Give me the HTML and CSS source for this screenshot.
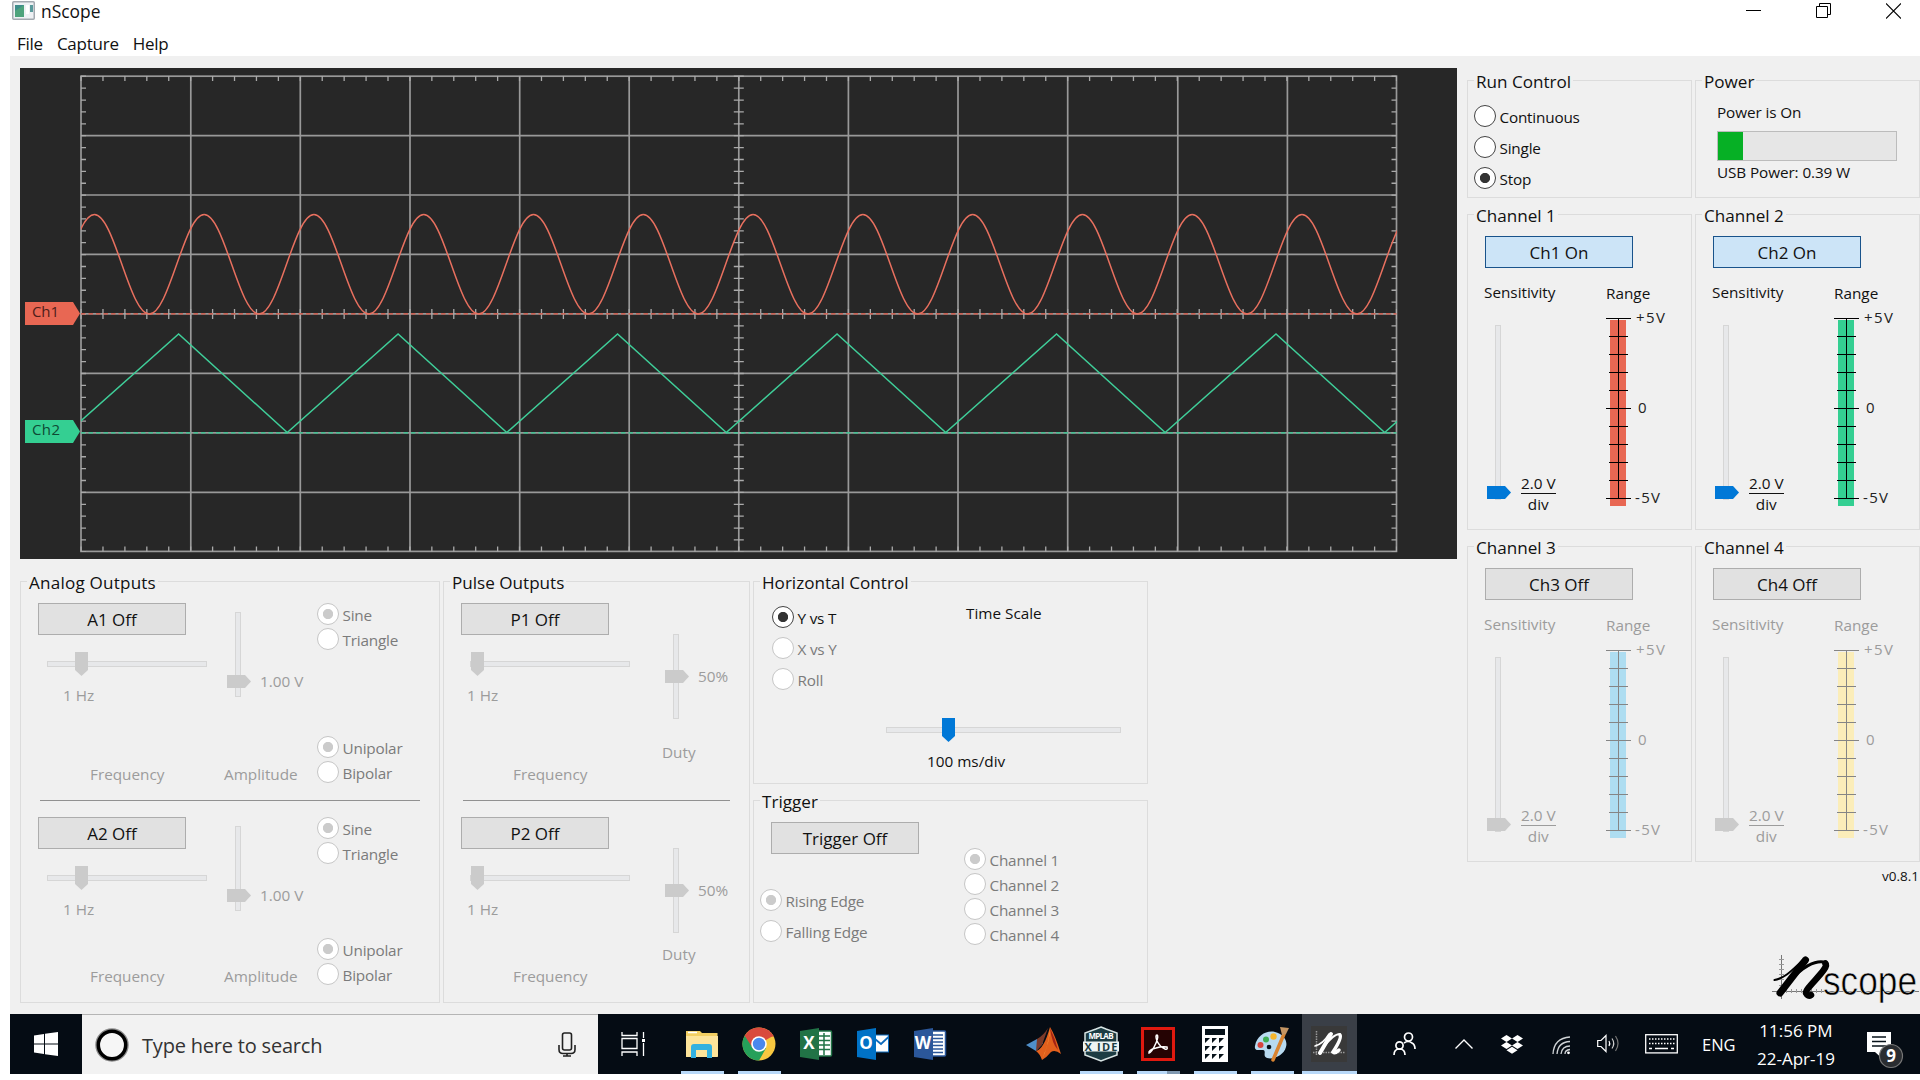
FILE: index.html
```html
<!DOCTYPE html>
<html lang="en">
<head>
<meta charset="utf-8">
<title>nScope</title>
<link rel="stylesheet" href="styles.css">
</head>
<body>
<svg class="defs" width="0" height="0" aria-hidden="true">
  <defs>
    <g id="meter-scale" fill="none" stroke="currentColor" shape-rendering="crispEdges">
      <path d="M12.5 12v181M0 12.5h25M0 102.5h25M0 192.5h25"/>
      <path class="minor" d="M3 30.5h19M3 48.5h19M3 66.5h19M3 84.5h19M3 120.5h19M3 138.5h19M3 156.5h19M3 174.5h19"/>
    </g>
  </defs>
</svg>

<header class="titlebar">
  <svg class="app-icon" width="23" height="19" viewBox="0 0 23 19">
    <rect x=".75" y=".75" width="21.5" height="17.5" rx="1" fill="#eef1f4" stroke="#a3a9b0" stroke-width="1.5"/>
    <rect x="3" y="4" width="9" height="12" fill="#3f8d8b"/><path d="M3 16V10L12 4v12z" fill="#4ea37c"/>
    <rect x="14" y="4" width="3" height="9" fill="#fff"/><rect x="18" y="4" width="3" height="7" fill="#5a9a9c"/>
  </svg>
  <h1>nScope</h1>
  <div class="caption-buttons">
    <svg width="15" height="16" viewBox="0 0 15 16"><path d="M0 7.5h15" stroke="#000" fill="none"/></svg>
    <svg width="15" height="16" viewBox="0 0 15 16"><path d="M.5 3.5h11v11H.5zM3.5 3.500V.5h11v11h-3" stroke="#000" fill="none"/></svg>
    <svg width="15" height="16" viewBox="0 0 15 16"><path d="M0 .5l15 15M15 .5l-15 15" stroke="#000" fill="none" stroke-width="1.1"/></svg>
  </div>
</header>
<nav class="menubar"><span>File</span><span>Capture</span><span>Help</span></nav>

<main class="client">
  <div class="left">
    <svg class="scope" width="1437" height="491" viewBox="20 68 1437 491">
      <rect x="20" y="68" width="1437" height="491" fill="#272727"/>
      <g class="grid">
        <rect x="81" y="76.200" width="1315.500" height="475.200"/>
        <path d="M190.800 76v475.500M300.300 76v475.500M410 76v475.500M519.700 76v475.500M629.200 76v475.500M738.800 76v475.500M848.400 76v475.500M958 76v475.500M1067.700 76v475.500M1177.800 76v475.500M1287.400 76v475.500"/>
        <path d="M81 135.600h1315.500M81 195h1315.500M81 254.400h1315.500M81 313.900h1315.500M81 373.300h1315.500M81 432.800h1315.500M81 492.300h1315.500"/>
      </g>
      <g class="ticks-x">
        <path stroke-width="5" d="M80.400 78.500H1397M80.400 549H1397"/>
        <path stroke-width="10" d="M80.400 314H1397"/>
      </g>
      <g class="ticks-y">
        <path stroke-width="5" d="M83.500 75.600V552M1394 75.600V552"/>
        <path stroke-width="10" d="M738.800 75.600V552"/>
      </g>
      <path d="M81 313.900H1396.500" stroke="#d9503f" stroke-width="1.300" stroke-dasharray="4.500 3"/>
      <path d="M81 432.800H1396.500" stroke="#2ecc91" stroke-width="1.300" stroke-dasharray="4.500 3"/>
      <svg x="81" y="76" width="1316" height="476" viewBox="0 0 1316 476" fill="none" stroke-width="1.500">
        <path stroke="#e8705f" d="M-41.500 238c20 0 34.900-99.400 54.890-99.400s34.900 99.400 54.890 99.400 34.900-99.400 54.890-99.400 34.900 99.400 54.890 99.400 34.900-99.400 54.890-99.400 34.900 99.400 54.890 99.400 34.900-99.400 54.890-99.400 34.900 99.400 54.890 99.400 34.900-99.400 54.890-99.400 34.900 99.400 54.890 99.400 34.900-99.400 54.890-99.400 34.900 99.400 54.890 99.400 34.900-99.400 54.890-99.400 34.900 99.400 54.890 99.400 34.900-99.400 54.890-99.400 34.900 99.400 54.890 99.400 34.900-99.400 54.890-99.400 34.900 99.400 54.890 99.400 34.900-99.400 54.890-99.400 34.900 99.400 54.890 99.400 34.900-99.400 54.890-99.400 34.900 99.400 54.890 99.400 34.900-99.400 54.890-99.400 34.900 99.400 54.890 99.400 34.900-99.400 54.890-99.400"/>
        <path stroke="#3fce99" d="M-13.200 356.500l110.800-98.500 108.680 98.500 110.800-98.500 108.680 98.500 110.800-98.500 108.680 98.500 110.800-98.500 108.680 98.500 110.800-98.500 108.680 98.500 110.800-98.500 108.680 98.500 110.800-98.500"/>
      </svg>
      <path d="M25 302h48l7 11.500-7 11.500H25z" fill="#e86753"/>
      <path d="M25 420h48l7 11.500-7 11.500H25z" fill="#34cf92"/>
      <text class="flag" x="32" y="317" textLength="27" fill="#4d201a">Ch1</text>
      <text class="flag" x="32" y="435" textLength="28" fill="#0f4a34">Ch2</text>
    </svg>

    <div class="panels">
      <fieldset class="group analog">
        <legend>Analog Outputs</legend>
        <section class="unit">
          <div class="freq">
            <button class="btn">A1 Off</button>
            <div class="hslider off"><i></i><b class="at-28"></b></div>
            <span class="hz">1 Hz</span>
            <span class="caption">Frequency</span>
          </div>
          <div class="amp">
            <div class="vrow"><div class="vslider off"><i></i><b class="at-63"></b></div><span>1.00 V</span></div>
            <span class="caption">Amplitude</span>
          </div>
          <div class="modes">
            <div class="radios"><label class="radio off on">Sine</label><label class="radio off">Triangle</label></div>
            <div class="radios"><label class="radio off on">Unipolar</label><label class="radio off">Bipolar</label></div>
          </div>
        </section>
        <hr>
        <section class="unit second">
          <div class="freq">
            <button class="btn">A2 Off</button>
            <div class="hslider off"><i></i><b class="at-28"></b></div>
            <span class="hz">1 Hz</span>
            <span class="caption">Frequency</span>
          </div>
          <div class="amp">
            <div class="vrow"><div class="vslider off"><i></i><b class="at-63"></b></div><span>1.00 V</span></div>
            <span class="caption">Amplitude</span>
          </div>
          <div class="modes">
            <div class="radios"><label class="radio off on">Sine</label><label class="radio off">Triangle</label></div>
            <div class="radios"><label class="radio off on">Unipolar</label><label class="radio off">Bipolar</label></div>
          </div>
        </section>
      </fieldset>

      <fieldset class="group pulse">
        <legend>Pulse Outputs</legend>
        <section class="unit">
          <div class="freq">
            <button class="btn">P1 Off</button>
            <div class="hslider off"><i></i><b class="at-1"></b></div>
            <span class="hz">1 Hz</span>
            <span class="caption">Frequency</span>
          </div>
          <div class="duty">
            <div class="vrow"><div class="vslider off"><i></i><b class="at-36"></b></div><span>50%</span></div>
            <span class="caption">Duty</span>
          </div>
        </section>
        <hr>
        <section class="unit second">
          <div class="freq">
            <button class="btn">P2 Off</button>
            <div class="hslider off"><i></i><b class="at-1"></b></div>
            <span class="hz">1 Hz</span>
            <span class="caption">Frequency</span>
          </div>
          <div class="duty">
            <div class="vrow"><div class="vslider off"><i></i><b class="at-36"></b></div><span>50%</span></div>
            <span class="caption">Duty</span>
          </div>
        </section>
      </fieldset>

      <div class="stack">
        <fieldset class="group horizontal">
          <legend>Horizontal Control</legend>
          <div class="hbody">
            <div class="radios wide"><label class="radio on">Y vs T</label><label class="radio off">X vs Y</label><label class="radio off">Roll</label></div>
            <div class="timescale">
              <span class="ts-title">Time Scale</span>
              <div class="hslider"><i></i><b class="at-56"></b></div>
              <span class="ts-value">100 ms/div</span>
            </div>
          </div>
        </fieldset>
        <fieldset class="group trigger">
          <legend>Trigger</legend>
          <div class="tbody">
            <div>
              <button class="btn">Trigger Off</button>
              <div class="radios wide"><label class="radio off on">Rising Edge</label><label class="radio off">Falling Edge</label></div>
            </div>
            <div class="radios sources"><label class="radio off on">Channel 1</label><label class="radio off">Channel 2</label><label class="radio off">Channel 3</label><label class="radio off">Channel 4</label></div>
          </div>
        </fieldset>
      </div>
    </div>
  </div>

  <aside class="right">
    <fieldset class="group run">
      <legend>Run Control</legend>
      <div class="radios wide"><label class="radio">Continuous</label><label class="radio">Single</label><label class="radio on">Stop</label></div>
    </fieldset>
    <fieldset class="group power">
      <legend>Power</legend>
      <span>Power is On</span>
      <div class="progress"><div style="width:14%"></div></div>
      <span>USB Power: 0.39 W</span>
    </fieldset>

    <fieldset class="group channel">
      <legend>Channel 1</legend>
      <button class="btn active">Ch1 On</button>
      <div class="chbody">
        <div class="sens"><span>Sensitivity</span>
          <div class="vrow"><div class="vslider"><i></i><b class="at-161"></b></div><div class="fraction"><span>2.0 V</span><span>div</span></div></div>
        </div>
        <div class="range"><span>Range</span>
          <svg class="meter" width="62" height="204" viewBox="0 0 62 204"><rect x="4" y="14" width="16" height="186" fill="#e86753"/><use href="#meter-scale"/><text x="30" y="16.500" textLength="29">+5V</text><text x="32" y="106.500">0</text><text x="29" y="196.500" textLength="25">-5V</text></svg>
        </div>
      </div>
    </fieldset>
    <fieldset class="group channel">
      <legend>Channel 2</legend>
      <button class="btn active">Ch2 On</button>
      <div class="chbody">
        <div class="sens"><span>Sensitivity</span>
          <div class="vrow"><div class="vslider"><i></i><b class="at-161"></b></div><div class="fraction"><span>2.0 V</span><span>div</span></div></div>
        </div>
        <div class="range"><span>Range</span>
          <svg class="meter" width="62" height="204" viewBox="0 0 62 204"><rect x="4" y="14" width="16" height="186" fill="#34cf92"/><use href="#meter-scale"/><text x="30" y="16.500" textLength="29">+5V</text><text x="32" y="106.500">0</text><text x="29" y="196.500" textLength="25">-5V</text></svg>
        </div>
      </div>
    </fieldset>
    <fieldset class="group channel disabled">
      <legend>Channel 3</legend>
      <button class="btn">Ch3 Off</button>
      <div class="chbody">
        <div class="sens"><span>Sensitivity</span>
          <div class="vrow"><div class="vslider off"><i></i><b class="at-161"></b></div><div class="fraction"><span>2.0 V</span><span>div</span></div></div>
        </div>
        <div class="range"><span>Range</span>
          <svg class="meter" width="62" height="204" viewBox="0 0 62 204"><rect x="4" y="14" width="16" height="186" fill="#aeddf1"/><use href="#meter-scale"/><text x="30" y="16.500" textLength="29">+5V</text><text x="32" y="106.500">0</text><text x="29" y="196.500" textLength="25">-5V</text></svg>
        </div>
      </div>
    </fieldset>
    <fieldset class="group channel disabled">
      <legend>Channel 4</legend>
      <button class="btn">Ch4 Off</button>
      <div class="chbody">
        <div class="sens"><span>Sensitivity</span>
          <div class="vrow"><div class="vslider off"><i></i><b class="at-161"></b></div><div class="fraction"><span>2.0 V</span><span>div</span></div></div>
        </div>
        <div class="range"><span>Range</span>
          <svg class="meter" width="62" height="204" viewBox="0 0 62 204"><rect x="4" y="14" width="16" height="186" fill="#fbedb9"/><use href="#meter-scale"/><text x="30" y="16.500" textLength="29">+5V</text><text x="32" y="106.500">0</text><text x="29" y="196.500" textLength="25">-5V</text></svg>
        </div>
      </div>
    </fieldset>
    <div class="brand">
      <span class="version">v0.8.1</span>
      <svg class="logo" width="148" height="58" viewBox="1772 953 148 58">
        <path d="M1781.500 954v44M1772 990.500h147" stroke="#777" fill="none"/>
        <path d="M1779 958.500h5M1779 963.500h5M1779 968.500h5M1779 973.500h5M1779 978.500h5M1779 984.500h5M1786.500 988v4M1791.500 988v4M1796.500 988v4M1801.500 988v4M1811.500 988v4M1816.500 988v4M1821.500 988v4M1836.500 988v4M1846.500 988v4M1861.500 988v4" stroke="#999" fill="none"/>
        <path d="M1774.500 979C1786 977 1794 967 1803 959" fill="none" stroke="#000" stroke-width="2" stroke-linecap="round"/>
        <path d="M1805.500 959L1780 992" fill="none" stroke="#000" stroke-width="7" stroke-linecap="round"/>
        <path d="M1787 983C1801 966 1816 958 1826 961.500" fill="none" stroke="#000" stroke-width="3" stroke-linecap="round"/>
        <path d="M1825.500 962.500C1830 967 1805 987 1806 992Q1808 996 1811 994" fill="none" stroke="#000" stroke-width="6.500" stroke-linecap="round" stroke-linejoin="round"/>
        <text x="1823" y="994" textLength="94" lengthAdjust="spacingAndGlyphs">scope</text>
      </svg>
    </div>
  </aside>
</main>

<footer class="taskbar">
  <div class="start"><svg width="24" height="24" viewBox="0 0 24 24" fill="#fff"><path d="M0 3.500L10 2v9.500H0zM11 1.800L24 0v11.500H11zM0 12.500h10V22L0 20.500zM11 12.500h13V24l-13-1.800z"/></svg></div>
  <div class="search">
    <svg width="34" height="34" viewBox="0 0 34 34"><circle cx="17" cy="17" r="15.500" fill="none" stroke="#8d8d8d" stroke-width="2.500"/><circle cx="17" cy="17" r="13.700" fill="#f6f6f6" stroke="#000" stroke-width="3.500"/></svg>
    <span>Type here to search</span>
    <svg class="mic" width="18" height="25" viewBox="0 0 18 25" fill="none" stroke="#222" stroke-width="1.600"><rect x="4.500" y="1" width="9" height="17" rx="2"/><path d="M1 13v4.500q0 4 4 4h8q4 0 4-4V13M9 21v3M5 24h8"/></svg>
  </div>
  <div class="taskview"><svg width="26" height="24" viewBox="0 0 26 24" fill="none" stroke="#fff" stroke-width="1.300"><path d="M1 0v3.500h15V0M1 6.500h15v10H1zM1 24v-4h15v4M22.500 0v6M22.500 11v13"/><path d="M21 7h3v3h-3z" fill="#fff" stroke="none"/></svg></div>
  <div class="apps">
    <div class="app running"><svg width="34" height="36" viewBox="0 0 34 36"><path d="M1 5h14l2 2h15.500v24H1z" fill="#f3cf62"/><path d="M1 10h32v20q0 1-1 1H2q-1 0-1-1z" fill="#fde49a"/><path d="M3 6.500h9" stroke="#fff" stroke-width="1.500"/><path d="M6 32V21q0-3 3-3h15q3 0 3 3v11h-5v-8H11v8z" fill="#33b1e0"/></svg></div>
    <div class="app running"><svg width="36" height="36" viewBox="-18 -18 36 36"><circle r="16.500" fill="#f8c840"/><path d="M0 0L-14.300-8.250A16.500 16.500 0 0 1 14.300-8.250z" fill="#d94a3d"/><path d="M-14.300-8.250A16.500 16.500 0 0 0 0 16.500L7.100 4.100 0 0z" fill="#25a05a"/><path d="M0-7.500h15l-.7-1L0-14z" fill="#d94a3d"/><path d="M-14.300-8.250L-6.500 3.700 0-7z" fill="#d94a3d"/><circle r="7.800" fill="#fff"/><circle r="6.200" fill="#4a88ee"/></svg></div>
    <div class="app"><svg width="34" height="34" viewBox="0 0 34 34"><rect x="18" y="4" width="14.500" height="25" rx="1" fill="#fff" stroke="#217346" stroke-width="1.500"/><path d="M20 9h11M20 13.500h11M20 18h11M20 22.500h11M25 6v22" stroke="#217346" stroke-width="1.500"/><path d="M1 4l19-3v32L1 30z" fill="#217346"/><text class="office" x="10" y="22">X</text></svg></div>
    <div class="app"><svg width="34" height="34" viewBox="0 0 34 34"><rect x="18" y="8" width="14.500" height="17" fill="#fff" stroke="#0f6cbd"/><path d="M19 12l6 5 7.500-7" fill="none" stroke="#0f6cbd" stroke-width="1.800"/><path d="M1 4l19-3v32L1 30z" fill="#0072c6"/><text class="office" x="10" y="22">O</text></svg></div>
    <div class="app"><svg width="34" height="34" viewBox="0 0 34 34"><rect x="18" y="4" width="14.500" height="25" rx="1" fill="#fff" stroke="#2b579a" stroke-width="1.500"/><path d="M20 8h10M20 11.500h10M20 15h10M20 18.500h10M20 22h10M20 25.500h10" stroke="#2b579a" stroke-width="1.500"/><path d="M1 4l19-3v32L1 30z" fill="#2b579a"/><text class="office" x="10" y="22">W</text></svg></div>
    <div class="app"></div>
    <div class="app"><svg width="36" height="34" viewBox="0 0 36 34"><path d="M0 18l11-6 6 4-7 8z" fill="#4f8fc9"/><path d="M11 12Q18 8 22 1l-6 17-6 6z" fill="#7a3a2a"/><path d="M24 0Q29 8 35 27q-6-5-10-2-4 5-9 8-2-6-6-9 8-2 14-24z" fill="#e2601d"/><path d="M24 1q0 14-8 31 6-10 8-31z" fill="#fdb64c"/><path d="M24 1q5 10 8 22-6-6-8-22z" fill="#a32315"/></svg></div>
    <div class="app running"><svg width="38" height="36" viewBox="0 0 38 36"><path d="M19 1l5 2 11 4v22l-11 4-5 2-5-2-11-4V7l11-4z" fill="#1c3c43" stroke="#d7e3e3" stroke-width="1.500"/><rect x="1" y="15.500" width="36" height="10" fill="#edf4f3"/><text class="mp" x="19" y="13" textLength="25">MPLAB</text><text class="ide" x="19" y="24.500" textLength="33">X IDE</text></svg></div>
    <div class="app running dual"><svg width="34" height="34" viewBox="0 0 34 34"><rect x="1.500" y="1.500" width="31" height="31" fill="#250303" stroke="#e0190f" stroke-width="3"/><path d="M8 26q-1-3 7-5 6-2 11-1 1 3-2 2-5-2-8-8-2-6 0-6 2 1-1 8-4 9-7 10z" fill="none" stroke="#fff" stroke-width="1.500"/></svg></div>
    <div class="app running"><svg width="26" height="36" viewBox="0 0 26 36"><path d="M0 0h26v36H0z" fill="#fff"/><path d="M3 3h20v6H3zM3 12h5l-5 5zM10 12h5l-5 5zM17 12h5l-5 5zM3 20h5l-5 5zM10 20h5l-5 5zM17 20h5l-5 5zM3 28h5l-5 5zM10 28h5l-5 5zM17 28h5l-5 5z" fill="#07121a"/></svg></div>
    <div class="app running"><svg width="38" height="36" viewBox="0 0 38 36"><path d="M2 20C4 9 14 4 22 6c8 2 13 8 11 15-2 8-12 13-19 11-5-2 0-7-4-8-4 0-9 1-8-4z" fill="#b8daf0"/><circle cx="7.500" cy="19" r="3" fill="#d8453e"/><circle cx="13" cy="13.500" r="3" fill="#3faf55"/><circle cx="20.500" cy="10.500" r="3.200" fill="#f5b62e"/><circle cx="16" cy="21" r="2.300" fill="#07121a"/><path d="M31 8L20 34" stroke="#d98431" stroke-width="3.500" stroke-linecap="round"/><path d="M27 1l9 1-3 6-4 1z" fill="#c49563"/></svg></div>
    <div class="app running current"><svg width="36" height="36" viewBox="0 0 36 36"><rect width="36" height="36" fill="#393939"/><path d="M5.500 5v24M2 26.500h32" stroke="#9a9a9a" stroke-width="1.500" stroke-dasharray="1.500 1"/><g stroke="#fff" fill="none" stroke-linecap="round"><path d="M4 20q8-2 14-12" stroke-width="1.500"/><path d="M20 8L9 27" stroke-width="4"/><path d="M12 22Q22 8 29 8" stroke-width="2"/><path d="M29 9Q31 12 22 26q2 2 6-2" stroke-width="3.500"/></g></svg></div>
  </div>
  <div class="tray">
    <svg class="people" width="23" height="24" viewBox="0 0 23 24" fill="none" stroke="#fff" stroke-width="1.700"><circle cx="15.500" cy="5" r="4"/><path d="M11 11q4-3 8 0 3 1.500 3 6"/><circle cx="6.500" cy="13.500" r="3.600"/><path d="M1 23q0-6 5.500-6t5.500 6"/></svg>
    <svg class="chev" width="18" height="10" viewBox="0 0 18 10" fill="none" stroke="#fff" stroke-width="1.400"><path d="M.5 9.500L9 1l8.500 8.500"/></svg>
    <svg class="dropbox" width="22" height="19" viewBox="0 0 22 19" fill="#fff"><path d="M5.500 0L11 3.500 5.500 7 0 3.500zM16.500 0L22 3.500 16.500 7 11 3.500zM5.500 7L11 10.500 5.500 14 0 10.500zM16.500 7L22 10.500 16.500 14 11 10.500zM5.500 15.200L11 11.700l5.500 3.500L11 18.700z"/></svg>
    <svg class="wifi" width="19" height="19" viewBox="0 0 19 19" fill="none" stroke="#cfd3d6" stroke-width="1.300"><path d="M1 18Q2 2 18 1M5 18Q6 6 18 5.500M9 18q1-8 9-8M13 18q0-4 5-4.500"/><circle cx="16.500" cy="16.800" r="1.400" fill="#fff" stroke="none"/></svg>
    <svg class="vol" width="23" height="19" viewBox="0 0 23 19" fill="none" stroke="#fff" stroke-width="1.200"><path d="M.7 6.500H4L9 1.500v16L4 12.500H.7z"/><path d="M12 7q1.500 2.500 0 5"/><path d="M15 4.500q3.500 5 0 10" stroke="#ccc"/><path d="M18.500 2q5 7.500 0 15" stroke="#777"/></svg>
    <svg class="kbd" width="33" height="20" viewBox="0 0 33 20" fill="none" stroke="#fff" stroke-width="1.300"><rect x=".7" y=".7" width="31.600" height="18.200"/><path d="M4 5h26M4 9.500h26" stroke-dasharray="1.500 1.500"/><path d="M4 14.500h3M10 14.500h13M26 14.500h3"/></svg>
    <span class="lang">ENG</span>
    <div class="clock"><span>11:56 PM</span><span>22-Apr-19</span></div>
    <svg class="notify" width="37" height="38" viewBox="0 0 37 38"><path d="M0 0h24v20H13.500v5L8 20H0z" fill="#fff"/><path d="M5 5h14M5 9.500h14M5 14h14" stroke="#07121a" stroke-width="1.300"/><circle cx="24" cy="24" r="11.500" fill="#2a2d31" stroke="#777" stroke-width="1.200"/><text x="24" y="29.500">9</text></svg>
  </div>
</footer>
</body>
</html>
```
FILE: styles.css
```css
* { box-sizing: border-box; }
body {
  margin: 0;
  width: 1920px;
  height: 1080px;
  padding-left: 10px;
  overflow: hidden;
  background: #fff;
  color: #111;
  font: 15.3px/20px "Open Sans", "Noto Sans", sans-serif;
  display: flex;
  flex-direction: column;
}
svg { display: block; flex: none; }
.defs { position: absolute; }

/* Title bar and menu */
.titlebar { height: 27px; display: flex; padding-left: 2px; }
.app-icon { margin-top: 1px; }
.titlebar h1 { margin: 0 0 0 6px; font-size: 17.4px; line-height: 22px; font-weight: 400; }
.caption-buttons { margin: 3px 19px 0 auto; display: flex; gap: 55px; }
.menubar { height: 29px; display: flex; gap: 14px; padding: 6px 0 0 7px; font-size: 17px; letter-spacing: -.25px; line-height: 22px; }

/* Client area */
.client { height: 958px; background: #f0f0f0; padding: 12px 0 0 10px; display: flex; gap: 10px; }
.left { width: 1437px; flex: none; }
.grid { fill: none; stroke: #999; stroke-width: 1.700; }
.ticks-x, .ticks-y { fill: none; stroke: #aaa; }
.ticks-x { stroke-dasharray: 1.300 20.625; }
.ticks-y { stroke-dasharray: 1.300 10.590; }
.flag { font-size: 15px; }

.panels { display: flex; gap: 3px; margin-top: 12px; }
.group { margin: 0; min-width: 0; padding: 0; border: 1px solid #dcdcdc; }
.group legend { margin-left: 6px; padding: 0 2px; height: 21px; font-size: 17.1px; line-height: 24px; white-space: nowrap; }
.analog legend { letter-spacing: .2px; }
.analog { width: 420px; height: 432px; }
.pulse { width: 307px; height: 432px; }
.stack { width: 395px; display: flex; flex-direction: column; gap: 6px; }
.horizontal { height: 213px; }
.trigger { height: 213px; }

.btn {
  display: block; width: 148px; height: 32px; padding: 1px 0 0;
  border: 1px solid #adadad; background: #e1e1e1; color: #111;
  font: 17px/29px "Open Sans", "Noto Sans", sans-serif;
}
.btn.active { background: #cce4f7; border-color: #19538b; }

/* Output units */
.unit { margin: 11px 0 0 17px; height: 182px; display: grid; color: #9c9c9c; }
.unit.second { height: 170px; margin-top: 16px; }
.analog .unit { grid-template-columns: 186px 94px 1fr; }
.pulse .unit { grid-template-columns: 201px 1fr; }
.group hr { margin: 15px 0 0 19px; border: 0; height: 1px; background: #919191; }
.analog hr { width: 380px; }
.pulse hr { width: 267px; }
.freq, .amp, .duty { display: flex; flex-direction: column; align-items: flex-start; }
.freq .hslider { margin: 17px 0 0 9px; width: 160px; }
.hz { margin: 9px 0 0 25px; }
.pulse .hz { margin-left: 6px; }
.caption { margin: auto 0 1px; }
.freq .caption { margin-left: 52px; }
.amp .vrow { margin: 9px 0 0 3px; height: 85px; }
.amp .vrow > span { margin: 59px 0 0 9px; }
.duty .vrow { margin: 31px 0 0 3px; height: 85px; }
.duty .vrow > span { margin: 32px 0 0 9px; }
.duty .caption { margin-bottom: 23px; }
.modes { display: flex; flex-direction: column; justify-content: space-between; margin-left: -1px; padding-bottom: 4px; }

/* Sliders */
.vrow { display: flex; white-space: nowrap; }
.hslider, .vslider { display: grid; }
.hslider i, .vslider i, .hslider b, .vslider b { grid-area: 1 / 1; }
.hslider i, .vslider i { border: 1px solid #d6d6d6; background: #e7e8ea; }
.hslider { height: 24px; }
.hslider i { height: 6px; align-self: center; }
.hslider b { width: 13px; height: 24px; background: #0078d7; clip-path: polygon(0 0, 100% 0, 100% 75%, 50% 100%, 0 75%); }
.vslider { width: 24px; flex: none; }
.vslider i { width: 6px; margin-left: 8px; }
.vslider b { width: 24px; height: 13px; background: #0078d7; clip-path: polygon(0 0, 75% 0, 100% 50%, 75% 100%, 0 100%); }
.off b { background: #cbcbcb; }
.hslider .at-1 { margin-left: 1px; }
.hslider .at-28 { margin-left: 28px; }
.hslider .at-56 { margin-left: 56px; }
.vslider .at-36 { margin-top: 36px; }
.vslider .at-63 { margin-top: 63px; }
.vslider .at-161 { margin-top: 161px; }

/* Radio buttons */
.radios { display: flex; flex-direction: column; gap: 5px; }
.radios.wide { gap: 11px; }
.radio { display: flex; height: 20px; line-height: 24px; gap: 3.500px; letter-spacing: -.2px; white-space: nowrap; }
.radio::before { content: ""; width: 20px; height: 20px; flex: none; border: 1px solid #444; border-radius: 50%; background: #fff; }
.radio.on::before { background: radial-gradient(circle, #333 4.700px, #fff 5.500px); }
.radio.off { color: #7b7b7b; }
.radio.off::before { border-color: #c6c6c6; }
.radio.off.on::before { background: radial-gradient(circle, #cbcbcb 4.700px, #fff 5.500px); }

/* Horizontal control and trigger */
.hbody { display: flex; padding: 14px 0 0 18px; }
.hbody .radios { width: 114px; }
.timescale { width: 235px; display: flex; flex-direction: column; margin-top: -3px; }
.ts-title { margin-left: 80px; }
.timescale .hslider { margin-top: 95px; }
.ts-value { margin: 9px 0 0 41px; }
.tbody { display: flex; padding: 11px 0 0 6px; }
.tbody > div:first-child { width: 204px; }
.tbody .btn { margin-left: 11px; }
.tbody .radios.wide { margin-top: 35px; }
.sources { margin-top: 26px; }

/* Right column */
.right { display: grid; grid-template-columns: 225px 225px; grid-template-rows: 128px 326px 326px 1fr; gap: 6px 3px; margin-top: 2px; }
.run .radios { margin: 14px 0 0 6px; }
.power > span { display: block; margin: 11px 0 0 21px; letter-spacing: -.1px; }
.power .progress + span { margin-top: 1px; }
.progress { width: 180px; height: 30px; margin: 9px 0 0 21px; border: 1px solid #bcbcbc; background: #e6e6e6; }
.progress div { height: 100%; background: #06b025; }
.channel .btn { margin: 11px 0 0 17px; }
.disabled { color: #9c9c9c; }
.disabled legend { color: #111; }
.chbody { display: flex; padding: 14px 0 0 16px; }
.sens { width: 122px; }
.sens > span, .range > span { display: block; }
.sens .vrow { margin: 23px 0 0 3px; height: 175px; }
.fraction { margin: 148px 0 0 10px; display: flex; flex-direction: column; align-items: center; height: 42px; }
.fraction span:first-child { height: 21px; border-bottom: 1px solid currentColor; }
.range > span { margin: 1px 0 0; }
.meter { margin-top: 3px; color: #000; font-size: 15px; fill: #222; }
.meter .minor { stroke: #222; }
.disabled .meter { color: #858585; fill: #9c9c9c; }
.brand { grid-column: 1 / 3; display: flex; flex-direction: column; align-items: flex-end; }
.version { margin: -1px 1px 0 0; font-size: 13.500px; line-height: 18px; }
.logo { margin-top: 69px; overflow: visible; }
.logo text { font-family: "Liberation Sans", sans-serif; font-size: 40px; stroke: #f0f0f0; stroke-width: .6px; }

/* Taskbar */
.taskbar { height: 60px; background: #050c14; color: #fff; display: flex; }
.start { width: 72px; display: grid; place-items: center; }
.search { width: 516px; background: #f2f2f2; border-top: 1px solid #b5b5b5; color: #333; display: flex; align-items: center; padding-left: 13px; font-size: 20px; letter-spacing: -.2px; }
.search span { margin: 2px 0 0 13px; line-height: 26px; }
.mic { margin: 0 22px 0 auto; }
.taskview { width: 83px; padding: 18px 0 0 23px; }
.apps { display: flex; gap: 14px; }
.app { width: 43px; display: grid; place-items: center; padding: 3px 1px 0 0; border-bottom: 3px solid transparent; }
.running { border-color: #b8d8f8; }
.dual { border-image: linear-gradient(90deg, #b8d8f8 68%, #8098b0 68%) 3; }
.current { width: 55px; margin-left: -6px; background: #3a3f47; }
.office { font: 700 17px "Open Sans", sans-serif; fill: #fff; text-anchor: middle; }
.mp { font: 700 8px "Open Sans", sans-serif; fill: #fff; text-anchor: middle; }
.ide { font: 700 11px "Open Sans", sans-serif; fill: #1c3c43; text-anchor: middle; }
.tray { display: flex; align-items: flex-start; padding-left: 36px; font-size: 16.500px; }
.people { margin-top: 18px; }
.chev { margin: 25px 0 0 39px; }
.dropbox { margin: 21px 0 0 28px; }
.wifi { margin: 22px 0 0 29px; }
.vol { margin: 20px 0 0 26px; }
.kbd { margin: 20px 0 0 25px; }
.lang { margin: 20px 0 0 24px; line-height: 22px; width: 34px; }
.clock { margin: 3px 0 0 17px; width: 86px; display: flex; flex-direction: column; align-items: center; font-size: 17px; line-height: 28px; white-space: nowrap; }
.notify { margin: 18px 0 0 28px; }
.notify text { font: 700 17px "Open Sans", sans-serif; fill: #fff; text-anchor: middle; }
```
